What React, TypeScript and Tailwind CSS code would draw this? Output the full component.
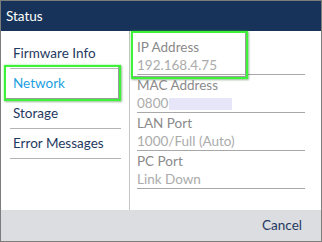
import React from "react";

const leftItems = ["Firmware Info", "Network", "Storage", "Error Messages"];

const rows: { label: string; value: string; redact?: boolean }[] = [
  { label: "IP Address", value: "192.168.4.75" },
  { label: "MAC Address", value: "0800", redact: true },
  { label: "LAN Port", value: "1000/Full (Auto)" },
  { label: "PC Port", value: "Link Down" },
];

export default function App() {
  return (
    <div
      className="w-[322px] h-[242px] border border-[#7c7c7c] flex flex-col bg-white overflow-hidden"
      style={{ fontFamily: "Lato, 'Open Sans', sans-serif" }}
    >
      <div className="h-[30px] shrink-0 bg-[#183359] text-white text-[13.5px] flex items-center pl-[5px]">
        Status
      </div>
      <div className="flex-1 flex min-h-0">
        <div className="w-[129px] shrink-0 border-r border-[#c4c4c4] pt-[8px]">
          {leftItems.map((item) => {
            const active = item === "Network";
            return (
              <div key={item} className="relative">
                <div
                  className={`h-[29px] flex items-center pl-[12px] text-[13.5px] ${
                    active ? "text-[#1d9fe2]" : "text-[#1f3a5f]"
                  }`}
                >
                  {item}
                </div>
                <div className="ml-[9px] mr-[8px] h-px bg-[#b4b4b4]" />
                {active && (
                  <div className="absolute left-[3px] top-[-4px] w-[117px] h-[36px] border-2 border-[#3ef23a] shadow-[0_0_2px_rgba(60,240,60,0.6),1px_1px_2px_rgba(0,0,0,0.3),inset_-1px_-1px_0_#9a9a9a]" />
                )}
              </div>
            );
          })}
        </div>
        <div className="flex-1 pt-[6px] pl-[7px] pr-[16px]">
          {rows.map((r, i) => (
            <div key={r.label} className="relative border-b border-[#a8a8a8] h-[38px]">
              <div className="h-[20px] leading-[20px] text-[13.5px] text-[#8a8a8a]">{r.label}</div>
              <div className="h-[17px] leading-[17px] text-[13.5px] text-[#ababab] flex items-center">
                {r.value}
                {r.redact && <span className="inline-block ml-[1px] w-[63px] h-[12px] bg-[#e6e6f8]" />}
              </div>
              {i === 0 && (
                <div className="absolute left-[-6px] top-[-6px] w-[117px] h-[48px] border-2 border-[#3ef23a] shadow-[0_0_2px_rgba(60,240,60,0.6),1px_1px_2px_rgba(0,0,0,0.3),inset_-1px_-1px_0_#9a9a9a]" />
              )}
            </div>
          ))}
        </div>
      </div>
      <div className="h-[31px] shrink-0 bg-[#dcdde0] flex items-center justify-end pr-[19px] text-[13.5px] text-[#1f3a5f]">
        Cancel
      </div>
    </div>
  );
}
